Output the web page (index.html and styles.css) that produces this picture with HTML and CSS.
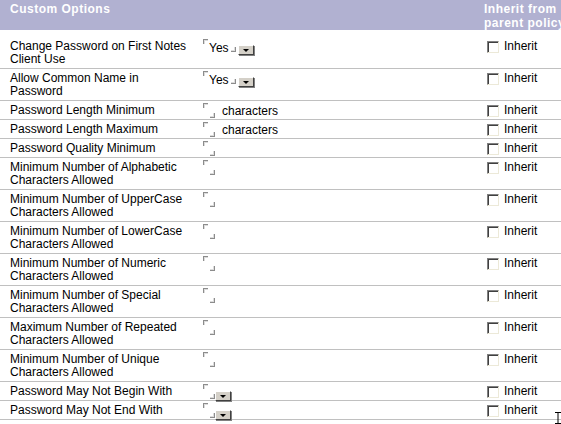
FILE: index.html
```html
<!DOCTYPE html>
<html>
<head>
<meta charset="utf-8">
<link rel="stylesheet" href="styles.css">
</head>
<body>
<div class="page">
  <div class="head row-grid">
    <div class="hcell hlab">Custom Options</div>
    <div class="hcell"></div>
    <div class="hcell hinh">Inherit from<br>parent policy</div>
  </div>
  <div class="spacer"></div>

  <div class="row row-grid">
    <div class="lab">Change Password on First Notes<br>Client Use</div>
    <div class="val"><span class="fld"><span class="tl"></span><span class="txt">Yes</span><span class="br"></span></span><span class="dd"><span class="tri"></span></span></div>
    <div class="inh"><span class="cb"></span>Inherit</div>
  </div>
  <div class="row row-grid">
    <div class="lab">Allow Common Name in<br>Password</div>
    <div class="val"><span class="fld"><span class="tl"></span><span class="txt">Yes</span><span class="br"></span></span><span class="dd"><span class="tri"></span></span></div>
    <div class="inh"><span class="cb"></span>Inherit</div>
  </div>
  <div class="row row-grid">
    <div class="lab">Password Length Minimum</div>
    <div class="val"><span class="fld empty"><span class="tl"></span><span class="br"></span></span><span class="unit">characters</span></div>
    <div class="inh"><span class="cb"></span>Inherit</div>
  </div>
  <div class="row row-grid">
    <div class="lab">Password Length Maximum</div>
    <div class="val"><span class="fld empty"><span class="tl"></span><span class="br"></span></span><span class="unit">characters</span></div>
    <div class="inh"><span class="cb"></span>Inherit</div>
  </div>
  <div class="row row-grid">
    <div class="lab">Password Quality Minimum</div>
    <div class="val"><span class="fld empty"><span class="tl"></span><span class="br"></span></span></div>
    <div class="inh"><span class="cb"></span>Inherit</div>
  </div>
  <div class="row row-grid">
    <div class="lab">Minimum Number of Alphabetic<br>Characters Allowed</div>
    <div class="val"><span class="fld empty"><span class="tl"></span><span class="br"></span></span></div>
    <div class="inh"><span class="cb"></span>Inherit</div>
  </div>
  <div class="row row-grid">
    <div class="lab">Minimum Number of UpperCase<br>Characters Allowed</div>
    <div class="val"><span class="fld empty"><span class="tl"></span><span class="br"></span></span></div>
    <div class="inh"><span class="cb"></span>Inherit</div>
  </div>
  <div class="row row-grid">
    <div class="lab">Minimum Number of LowerCase<br>Characters Allowed</div>
    <div class="val"><span class="fld empty"><span class="tl"></span><span class="br"></span></span></div>
    <div class="inh"><span class="cb"></span>Inherit</div>
  </div>
  <div class="row row-grid">
    <div class="lab">Minimum Number of Numeric<br>Characters Allowed</div>
    <div class="val"><span class="fld empty"><span class="tl"></span><span class="br"></span></span></div>
    <div class="inh"><span class="cb"></span>Inherit</div>
  </div>
  <div class="row row-grid">
    <div class="lab">Minimum Number of Special<br>Characters Allowed</div>
    <div class="val"><span class="fld empty"><span class="tl"></span><span class="br"></span></span></div>
    <div class="inh"><span class="cb"></span>Inherit</div>
  </div>
  <div class="row row-grid">
    <div class="lab">Maximum Number of Repeated<br>Characters Allowed</div>
    <div class="val"><span class="fld empty"><span class="tl"></span><span class="br"></span></span></div>
    <div class="inh"><span class="cb"></span>Inherit</div>
  </div>
  <div class="row row-grid">
    <div class="lab">Minimum Number of Unique<br>Characters Allowed</div>
    <div class="val"><span class="fld empty"><span class="tl"></span><span class="br"></span></span></div>
    <div class="inh"><span class="cb"></span>Inherit</div>
  </div>
  <div class="row row-grid">
    <div class="lab">Password May Not Begin With</div>
    <div class="val"><span class="fld empty"><span class="tl"></span><span class="br"></span></span><span class="dd low"><span class="tri"></span></span></div>
    <div class="inh"><span class="cb"></span>Inherit</div>
  </div>
  <div class="row row-grid">
    <div class="lab">Password May Not End With</div>
    <div class="val"><span class="fld empty"><span class="tl"></span><span class="br"></span></span><span class="dd low"><span class="tri"></span></span></div>
    <div class="inh"><span class="cb"></span>Inherit</div>
  </div>

  <svg class="cursor" width="8" height="12" viewBox="0 0 8 12"><path d="M1 0.5h6M4 0.5v11M1 11.5h6" stroke="#000" stroke-width="1" fill="none"/></svg>
</div>
</body>
</html>
```

FILE: styles.css
```css
html, body {
  margin: 0;
  padding: 0;
  overflow: hidden;
  background: #ffffff;
}
.page {
  position: relative;
  width: 561px;
  height: 424px;
  overflow: hidden;
  font-family: "Liberation Sans", Arial, sans-serif;
  font-size: 12px;
  color: #000;
}
.row-grid {
  display: grid;
  grid-template-columns: 203px 281px 120px;
  width: 604px;
}
.head {
  background: #b1b1d1;
  height: 30px;
  color: #ffffff;
  font-weight: bold;
  font-size: 12px;
  letter-spacing: 0.5px;
  line-height: 14px;
}
.hcell {
  padding-top: 2px;
  white-space: nowrap;
}
.hlab {
  padding-left: 10px;
}
.hinh {
  padding-left: 0;
}
.spacer {
  height: 7px;
}
.row {
  border-bottom: 1px solid #c0c0c0;
  padding: 3px 0 2px;
  line-height: 13px;
}
.lab {
  padding-left: 10px;
  white-space: nowrap;
}
.val {
  display: flex;
  align-items: flex-start;
  white-space: nowrap;
  height: 13px;
  margin-top: -1px;
}
.fld {
  display: inline-flex;
  height: 13px;
}
.tl {
  width: 4px;
  height: 4px;
  border-top: 1px solid #8c8c8c;
  border-left: 1px solid #8c8c8c;
  box-shadow: inset 1px 1px 0 #dcdcdc;
  align-self: flex-start;
}
.br {
  width: 4px;
  height: 4px;
  border-bottom: 1px solid #8c8c8c;
  border-right: 1px solid #8c8c8c;
  box-shadow: inset -1px -1px 0 #dcdcdc;
  align-self: flex-end;
}
.txt {
  padding: 3px 2px 0 1px;
  height: 10px;
}
.fld.empty .br {
  margin-left: 2px;
  margin-bottom: -2px;
}
.unit {
  padding-left: 7px;
  padding-top: 2px;
}
.dd {
  width: 14px;
  height: 8px;
  margin-top: 6px;
  margin-left: 2px;
  background: #d4d0c8;
  border-top: 1px solid #ffffff;
  border-left: 1px solid #ffffff;
  border-right: 1px solid #404040;
  border-bottom: 1px solid #404040;
  box-shadow: 1px 1px 0 #808080;
  display: inline-flex;
  align-items: center;
  justify-content: center;
}
.dd.low {
  margin-top: 7px;
  margin-left: 0;
}
.tri {
  width: 0;
  height: 0;
  border-left: 3px solid transparent;
  border-right: 3px solid transparent;
  border-top: 3px solid #000;
}
.inh {
  display: flex;
  align-items: center;
  white-space: nowrap;
  padding-left: 3px;
  height: 13px;
}
.cb {
  width: 10px;
  height: 10px;
  background: #fff;
  border-top: 1px solid #808080;
  border-left: 1px solid #808080;
  border-right: 1px solid #ece9d8;
  border-bottom: 1px solid #ece9d8;
  box-shadow: inset 1px 1px 0 #404040;
  margin-right: 5px;
}
.cursor {
  position: absolute;
  left: 554px;
  top: 412px;
}
```
